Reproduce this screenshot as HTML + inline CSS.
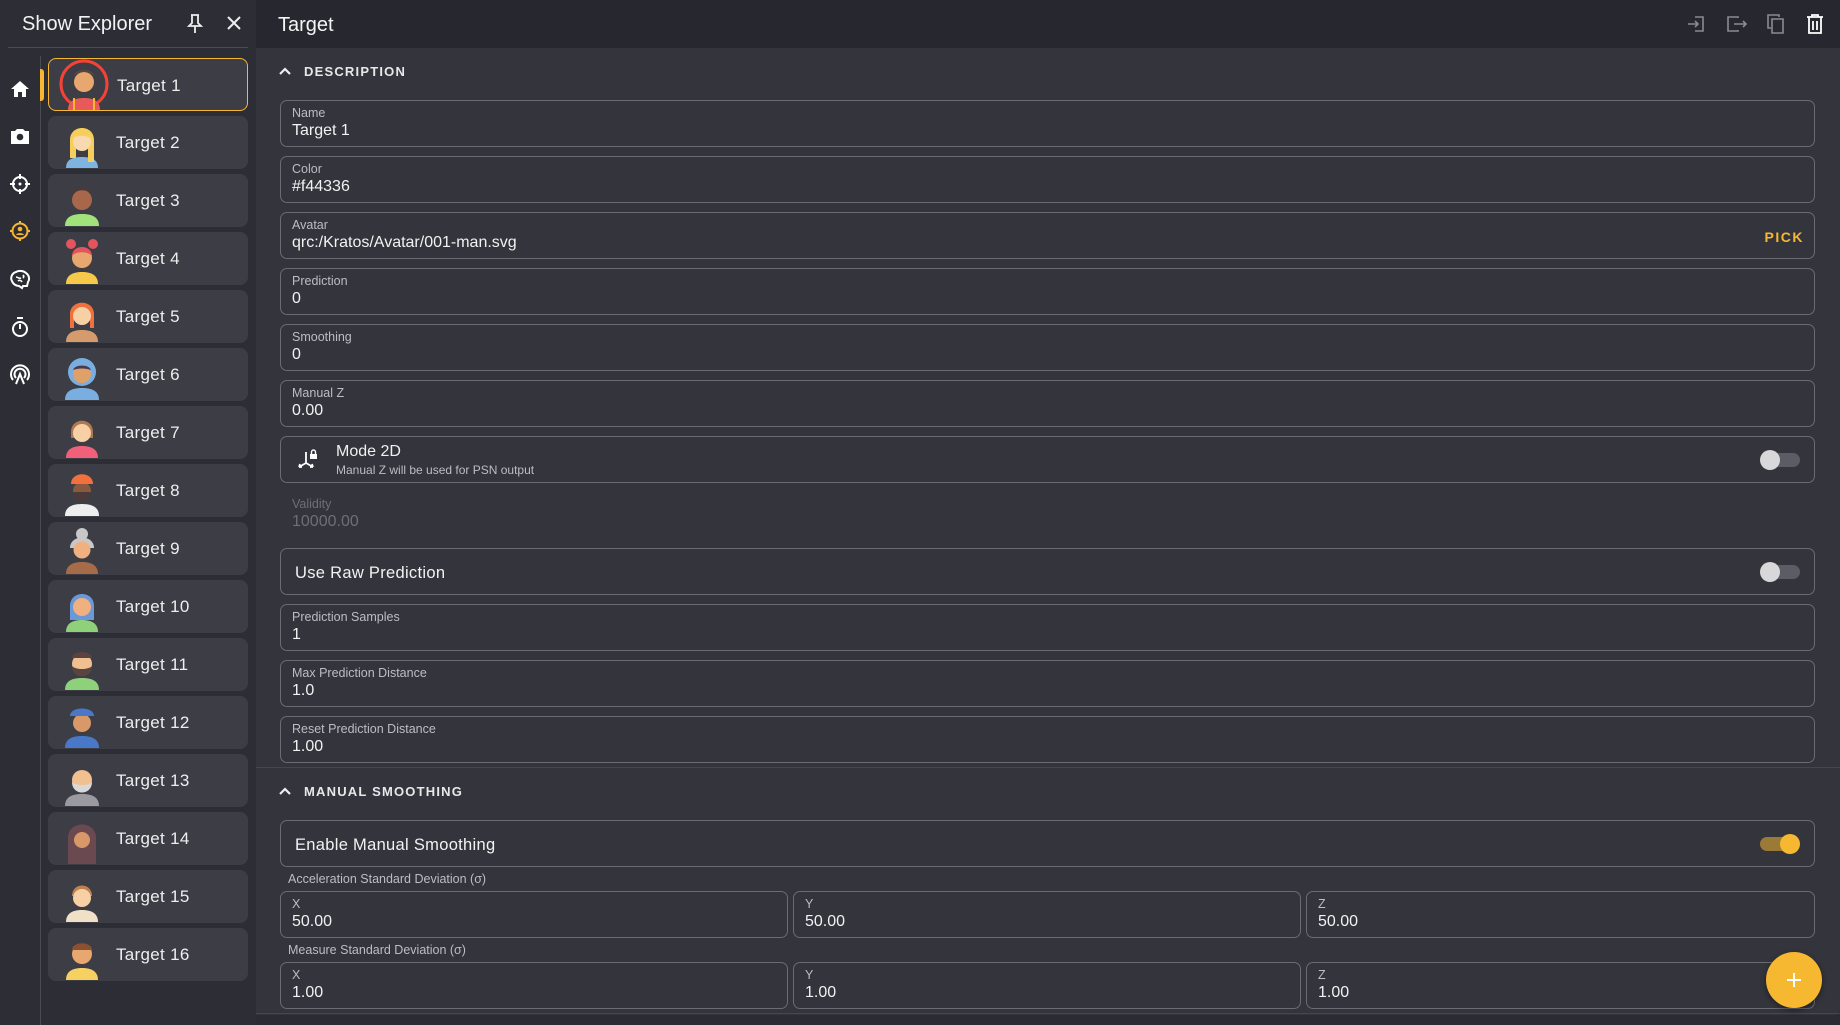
<!DOCTYPE html>
<html><head><meta charset="utf-8"><style>
*{box-sizing:border-box;margin:0;padding:0}
body{width:1840px;height:1025px;background:#2b2c33;font-family:"Liberation Sans",sans-serif;color:#f0f0f0;position:relative;overflow:hidden}
.side{position:absolute;left:0;top:0;width:256px;height:1025px;background:#2d2e35}
.stitle{position:absolute;left:22px;top:13px;font-size:20px;color:#f2f2f2}
.hl{position:absolute;left:8px;top:47px;width:240px;height:1px;background:#4a4b53}
.vl{position:absolute;left:40px;top:56px;width:1px;height:969px;background:#4a4b53}
.ind{position:absolute;left:40px;top:69px;width:4px;height:32px;background:#f6b731;border-radius:0 3px 3px 0}
.ic{position:absolute;left:8px;width:24px;height:24px}
.item{position:absolute;left:48px;width:200px;height:53px;background:#3c3d45;border-radius:8px;overflow:hidden}
.item span{position:absolute;left:68px;top:17px;font-size:17px;color:#eee;letter-spacing:0.3px}
.item svg{position:absolute;left:14px;top:2px}
.sel{border:1.5px solid #f6b731}
.main{position:absolute;left:256px;top:0;width:1584px;height:1015px;background:#33343c;border-radius:0 0 6px 0}
.hdr{position:absolute;left:256px;top:0;width:1584px;height:48px;background:#27282f}
.htitle{position:absolute;left:278px;top:14px;font-size:20px;color:#f4f4f4}
.sec{position:absolute;left:276px;font-size:13px;font-weight:bold;letter-spacing:1.2px;color:#e8e8e8}
.f{position:absolute;left:280px;width:1535px;height:47px;border:1.3px solid #6a6b73;border-radius:7px}
.f .l{position:absolute;left:11px;top:5px;font-size:12.5px;color:#bdbdc2}
.f .v{position:absolute;left:11px;top:21px;font-size:16px;color:#f2f2f2}
.f .t{position:absolute;left:14px;top:15px;font-size:16.5px;color:#f2f2f2;letter-spacing:0.3px}
.tg{position:absolute;right:14px;top:13px;width:40px;height:20px}
.tg .tr{position:absolute;left:6px;top:3px;width:34px;height:14px;border-radius:7px;background:#5c5d64}
.tg .k{position:absolute;left:0;top:0;width:20px;height:20px;border-radius:50%;background:#d8d8da}
.lab{position:absolute;left:288px;font-size:12.5px;color:#bdbdc2}
</style></head><body>
<div class="side"></div>
<div class="stitle">Show Explorer</div>
<svg style="position:absolute;left:186px;top:14px" width="18" height="20" viewBox="0 0 18 20"><path d="M5 1h8M6 1v8l-3 3h12l-3-3V1M9 12v7" stroke="#eee" stroke-width="1.8" fill="none"/></svg>
<svg style="position:absolute;left:226px;top:15px" width="16" height="16" viewBox="0 0 16 16"><path d="M2 2l12 12M14 2L2 14" stroke="#eee" stroke-width="2"/></svg>
<div class="hl"></div><div class="vl"></div><div class="ind"></div>
<svg class="ic" style="top:77px" viewBox="0 0 24 24"><path d="M3 12L12 4l9 8h-3v8h-4v-5h-4v5H6v-8z" fill="#fff"/></svg>
<svg class="ic" style="top:124px" viewBox="0 0 24 24"><path d="M3 7h4l2-2h6l2 2h4v13H3z" fill="#fff"/><circle cx="12" cy="13" r="3.3" fill="#2d2e35"/></svg>
<svg class="ic" style="top:172px" viewBox="0 0 24 24"><circle cx="12" cy="12" r="7" stroke="#fff" stroke-width="2" fill="none"/><path d="M12 2v5M12 17v5M2 12h5M17 12h5" stroke="#fff" stroke-width="2"/><circle cx="12" cy="12" r="1.5" fill="#fff"/></svg>
<svg class="ic" style="top:219px" viewBox="0 0 24 24"><circle cx="12" cy="12" r="7.5" stroke="#f6b731" stroke-width="2" fill="none"/><path d="M12 2v3M12 19v3M2 12h3M19 12h3" stroke="#f6b731" stroke-width="2"/><circle cx="12" cy="10" r="2.3" fill="#f6b731"/><path d="M8 16c1-2.5 7-2.5 8 0z" fill="#f6b731"/></svg>
<svg class="ic" style="top:267px" viewBox="0 0 24 24"><path d="M4 14c-2-3 0-8 4-9 3-2 8-1 10 1 3 2 4 6 2 9l-1 4h-4l-1 2-3-2c-3 0-6-2-7-5z" stroke="#fff" stroke-width="2" fill="none"/><path d="M8 10c2 0 3 2 5 1M10 14c1-1 3-1 4 1M15 8c1 1 1 2 0 3" stroke="#fff" stroke-width="1.6" fill="none"/></svg>
<svg class="ic" style="top:315px" viewBox="0 0 24 24"><circle cx="12" cy="14" r="7" stroke="#fff" stroke-width="2" fill="none"/><path d="M9 3h6M12 14V9" stroke="#fff" stroke-width="2"/></svg>
<svg class="ic" style="top:362px" viewBox="0 0 24 24"><path d="M5 18a9 9 0 1 1 14 0M8 16a5.5 5.5 0 1 1 8 0" stroke="#fff" stroke-width="2" fill="none"/><path d="M8 22l4-10 4 10" stroke="#fff" stroke-width="2" fill="none"/></svg>

<div class="item sel" style="top:58px"><svg width="44" height="50" viewBox="0 0 44 50" style="left:13px;top:1px;overflow:visible"><circle cx="22" cy="24" r="23" stroke="#f44336" stroke-width="3" fill="none"/><path d="M6 50c0-10 8-12 16-12s16 2 16 12z" fill="#e85a5a"/><circle cx="22" cy="22" r="10" fill="#e8a76f"/><path d="M12 18c0-8 20-8 20 0v-3c-2-7-18-7-20 0z" fill="#5a4440"/><rect x="11" y="38" width="2" height="12" fill="#f6b731"/><rect x="31" y="38" width="2" height="12" fill="#f6b731"/></svg><span>Target 1</span></div>
<div class="item" style="top:116px"><svg width="40" height="50" viewBox="0 0 40 50"><path d="M4 50c0-9 7-11 16-11s16 2 16 11z" fill="#7fb3e0"/><path d="M8 22c0-16 24-16 24 0v22h-6V26H14v14H8z" fill="#f6cf5a"/><circle cx="20" cy="24" r="9" fill="#f8d9b0"/><path d="M11 20c2-8 16-8 18 0c-6-3-12-3-18 0z" fill="#f6cf5a"/></svg><span>Target 2</span></div>
<div class="item" style="top:174px"><svg width="40" height="50" viewBox="0 0 40 50"><path d="M3 50c0-9 7-12 17-12s17 3 17 12z" fill="#a2e27a"/><circle cx="20" cy="24" r="10" fill="#a8674a"/><path d="M10 20c0-7 20-8 20-1v-4c-4-5-16-5-20 0z" fill="#4a3a36"/></svg><span>Target 3</span></div>
<div class="item" style="top:232px"><svg width="40" height="50" viewBox="0 0 40 50"><path d="M4 50c0-9 7-12 16-12s16 3 16 12z" fill="#f6c94a"/><circle cx="9" cy="10" r="5" fill="#e2555e"/><circle cx="31" cy="10" r="5" fill="#e2555e"/><circle cx="20" cy="24" r="10" fill="#e8a76f"/><path d="M10 22c0-12 20-12 20 0c-4-5-16-5-20 0z" fill="#e2555e"/></svg><span>Target 4</span></div>
<div class="item" style="top:290px"><svg width="40" height="50" viewBox="0 0 40 50"><path d="M4 50c0-9 7-12 16-12s16 3 16 12z" fill="#d59b6c"/><path d="M8 22c0-15 24-15 24 0v14h-4V26H12v10H8z" fill="#f0703e"/><circle cx="20" cy="24" r="9" fill="#f8d0a6"/></svg><span>Target 5</span></div>
<div class="item" style="top:348px"><svg width="40" height="50" viewBox="0 0 40 50"><path d="M3 50c0-9 7-12 17-12s17 3 17 12z" fill="#7aaee0"/><circle cx="20" cy="22" r="14" fill="#7aaee0"/><circle cx="20" cy="24" r="9" fill="#e0a06a"/><path d="M11 20c2-6 16-6 18 0c-6-2-12-2-18 0z" fill="#4a3a50"/></svg><span>Target 6</span></div>
<div class="item" style="top:406px"><svg width="40" height="50" viewBox="0 0 40 50"><path d="M4 50c0-9 7-12 16-12s16 3 16 12z" fill="#f0607a"/><path d="M9 24c0-15 22-15 22 0v6H9z" fill="#b07850"/><circle cx="20" cy="25" r="9" fill="#f8d0a6"/></svg><span>Target 7</span></div>
<div class="item" style="top:464px"><svg width="40" height="50" viewBox="0 0 40 50"><path d="M3 50c0-9 7-12 17-12s17 3 17 12z" fill="#eee"/><circle cx="20" cy="25" r="9" fill="#8a5a40"/><path d="M11 26c0 12 18 12 18 0z" fill="#4a3a3a"/><path d="M9 18c0-13 22-13 22 0z" fill="#f0703e"/></svg><span>Target 8</span></div>
<div class="item" style="top:522px"><svg width="40" height="50" viewBox="0 0 40 50"><path d="M4 50c0-9 7-12 16-12s16 3 16 12z" fill="#a66b48"/><circle cx="20" cy="10" r="6" fill="#c8c8c8"/><path d="M8 24c0-14 24-14 24 0z" fill="#c8c8c8"/><circle cx="20" cy="26" r="8.5" fill="#f0b080"/></svg><span>Target 9</span></div>
<div class="item" style="top:580px"><svg width="40" height="50" viewBox="0 0 40 50"><path d="M4 50c0-9 7-12 16-12s16 3 16 12z" fill="#8fd07a"/><path d="M8 24c0-16 24-16 24 0v14H8z" fill="#6a98d8"/><circle cx="20" cy="25" r="9" fill="#f0b080"/></svg><span>Target 10</span></div>
<div class="item" style="top:638px"><svg width="40" height="50" viewBox="0 0 40 50"><path d="M3 50c0-9 7-12 17-12s17 3 17 12z" fill="#8fd07a"/><circle cx="20" cy="24" r="10" fill="#f0c090"/><path d="M10 26c0 14 20 14 20 0c-4 4-16 4-20 0z" fill="#5a4440"/><path d="M10 18c0-8 20-8 20 0z" fill="#5a4440"/></svg><span>Target 11</span></div>
<div class="item" style="top:696px"><svg width="40" height="50" viewBox="0 0 40 50"><path d="M3 50c0-9 7-12 17-12s17 3 17 12z" fill="#4a78c8"/><circle cx="20" cy="25" r="9" fill="#d89868"/><path d="M8 18c0-10 24-10 24 0z" fill="#4a78c8"/></svg><span>Target 12</span></div>
<div class="item" style="top:754px"><svg width="40" height="50" viewBox="0 0 40 50"><path d="M3 50c0-9 7-12 17-12s17 3 17 12z" fill="#9a9aa0"/><circle cx="20" cy="24" r="10" fill="#f0c090"/><path d="M10 26c0 14 20 14 20 0c-4 4-16 4-20 0z" fill="#d8d8d8"/></svg><span>Target 13</span></div>
<div class="item" style="top:812px"><svg width="40" height="50" viewBox="0 0 40 50"><path d="M6 50V24c0-18 28-18 28 0v26z" fill="#6a4a50"/><circle cx="20" cy="26" r="8" fill="#d89868"/></svg><span>Target 14</span></div>
<div class="item" style="top:870px"><svg width="40" height="50" viewBox="0 0 40 50"><path d="M4 50c0-9 7-12 16-12s16 3 16 12z" fill="#f0e0c8"/><path d="M10 24c0-14 20-14 20 0z" fill="#c08050"/><circle cx="20" cy="26" r="9" fill="#f8d0a6"/></svg><span>Target 15</span></div>
<div class="item" style="top:928px"><svg width="40" height="50" viewBox="0 0 40 50"><path d="M4 50c0-9 7-12 16-12s16 3 16 12z" fill="#f6d060"/><circle cx="20" cy="24" r="10" fill="#e8a76f"/><path d="M10 20c0-9 20-9 20 0z" fill="#8a5030"/></svg><span>Target 16</span></div>

<div class="main"></div>
<div class="hdr"></div>
<div class="htitle">Target</div>
<svg style="position:absolute;left:1686px;top:14px" width="20" height="20" viewBox="0 0 20 20"><path d="M9 3h8v14H9M2 10h10M9 7l3 3-3 3" stroke="#8a8b92" stroke-width="1.6" fill="none"/></svg>
<svg style="position:absolute;left:1726px;top:14px" width="22" height="20" viewBox="0 0 22 20"><path d="M12 4V3H2v14h10v-1M8 10h12M17 7l3 3-3 3" stroke="#8a8b92" stroke-width="1.6" fill="none"/></svg>
<svg style="position:absolute;left:1766px;top:13px" width="20" height="22" viewBox="0 0 20 22"><path d="M13 4V2H2v13h3M6 6h11v14H6z" stroke="#8a8b92" stroke-width="1.6" fill="none"/></svg>
<svg style="position:absolute;left:1806px;top:13px" width="18" height="22" viewBox="0 0 18 22"><path d="M1 4h16M6 4V2h6v2M3 4v16h12V4M7 8v9M11 8v9" stroke="#fff" stroke-width="1.8" fill="none"/></svg>

<div class="sec" style="top:64px"><svg width="14" height="10" viewBox="0 0 14 10" style="margin:0 12px 0 2px"><path d="M2 8l5-5 5 5" stroke="#eee" stroke-width="2.2" fill="none"/></svg>DESCRIPTION</div>

<div class="f" style="top:100px"><div class="l">Name</div><div class="v">Target 1</div></div>
<div class="f" style="top:156px"><div class="l">Color</div><div class="v">#f44336</div></div>
<div class="f" style="top:212px"><div class="l">Avatar</div><div class="v">qrc:/Kratos/Avatar/001-man.svg</div><div style="position:absolute;right:10px;top:16px;font-size:14px;font-weight:bold;letter-spacing:1.5px;color:#f6b731">PICK</div></div>
<div class="f" style="top:268px"><div class="l">Prediction</div><div class="v">0</div></div>
<div class="f" style="top:324px"><div class="l">Smoothing</div><div class="v">0</div></div>
<div class="f" style="top:380px"><div class="l">Manual Z</div><div class="v">0.00</div></div>
<div class="f" style="top:436px"><svg style="position:absolute;left:15px;top:11px" width="24" height="24" viewBox="0 0 24 24"><path d="M10 4v11M10 15l-7 4M10 15l7 4M3 19l1-3M3 19l3 0M17 19l-1-3M17 19l-3 0" stroke="#fff" stroke-width="1.8" fill="none"/><rect x="14" y="6" width="7" height="5" fill="#fff"/><path d="M15.5 6V4a2 2 0 0 1 4 0v2" stroke="#fff" stroke-width="1.4" fill="none"/></svg><div style="position:absolute;left:55px;top:6px;font-size:16px">Mode 2D</div><div style="position:absolute;left:55px;top:26px;font-size:12px;color:#bdbdc2">Manual Z will be used for PSN output</div><div class="tg"><div class="tr"></div><div class="k"></div></div></div>
<div class="lab" style="top:497px;left:292px;color:#6e6f76">Validity</div>
<div style="position:absolute;left:292px;top:513px;font-size:16px;color:#6e6f76">10000.00</div>
<div class="f" style="top:548px"><div class="t">Use Raw Prediction</div><div class="tg"><div class="tr"></div><div class="k"></div></div></div>
<div class="f" style="top:604px"><div class="l">Prediction Samples</div><div class="v">1</div></div>
<div class="f" style="top:660px"><div class="l">Max Prediction Distance</div><div class="v">1.0</div></div>
<div class="f" style="top:716px"><div class="l">Reset Prediction Distance</div><div class="v">1.00</div></div>
<div style="position:absolute;left:256px;top:767px;width:1584px;height:1px;background:#45464e"></div>
<div class="sec" style="top:784px"><svg width="14" height="10" viewBox="0 0 14 10" style="margin:0 12px 0 2px"><path d="M2 8l5-5 5 5" stroke="#eee" stroke-width="2.2" fill="none"/></svg>MANUAL SMOOTHING</div>
<div class="f" style="top:820px"><div class="t">Enable Manual Smoothing</div><div class="tg"><div class="tr" style="left:0;background:#9a7a36"></div><div class="k" style="left:20px;background:#f6b731"></div></div></div>
<div class="lab" style="top:872px">Acceleration Standard Deviation (σ)</div>
<div class="f" style="top:891px;width:508px"><div class="l">X</div><div class="v">50.00</div></div>
<div class="f" style="top:891px;left:793px;width:508px"><div class="l">Y</div><div class="v">50.00</div></div>
<div class="f" style="top:891px;left:1306px;width:509px"><div class="l">Z</div><div class="v">50.00</div></div>
<div class="lab" style="top:943px">Measure Standard Deviation (σ)</div>
<div class="f" style="top:962px;width:508px"><div class="l">X</div><div class="v">1.00</div></div>
<div class="f" style="top:962px;left:793px;width:508px"><div class="l">Y</div><div class="v">1.00</div></div>
<div class="f" style="top:962px;left:1306px;width:509px"><div class="l">Z</div><div class="v">1.00</div></div>
<div style="position:absolute;left:256px;top:1013px;width:1584px;height:1px;background:#45464e"></div>
<div style="position:absolute;left:1766px;top:952px;width:56px;height:56px;border-radius:50%;background:#f6b731;box-shadow:0 2px 6px rgba(0,0,0,.4)"><svg style="position:absolute;left:19px;top:19px" width="18" height="18" viewBox="0 0 18 18"><path d="M9 2v14M2 9h14" stroke="#fff" stroke-width="2"/></svg></div>
</body></html>
